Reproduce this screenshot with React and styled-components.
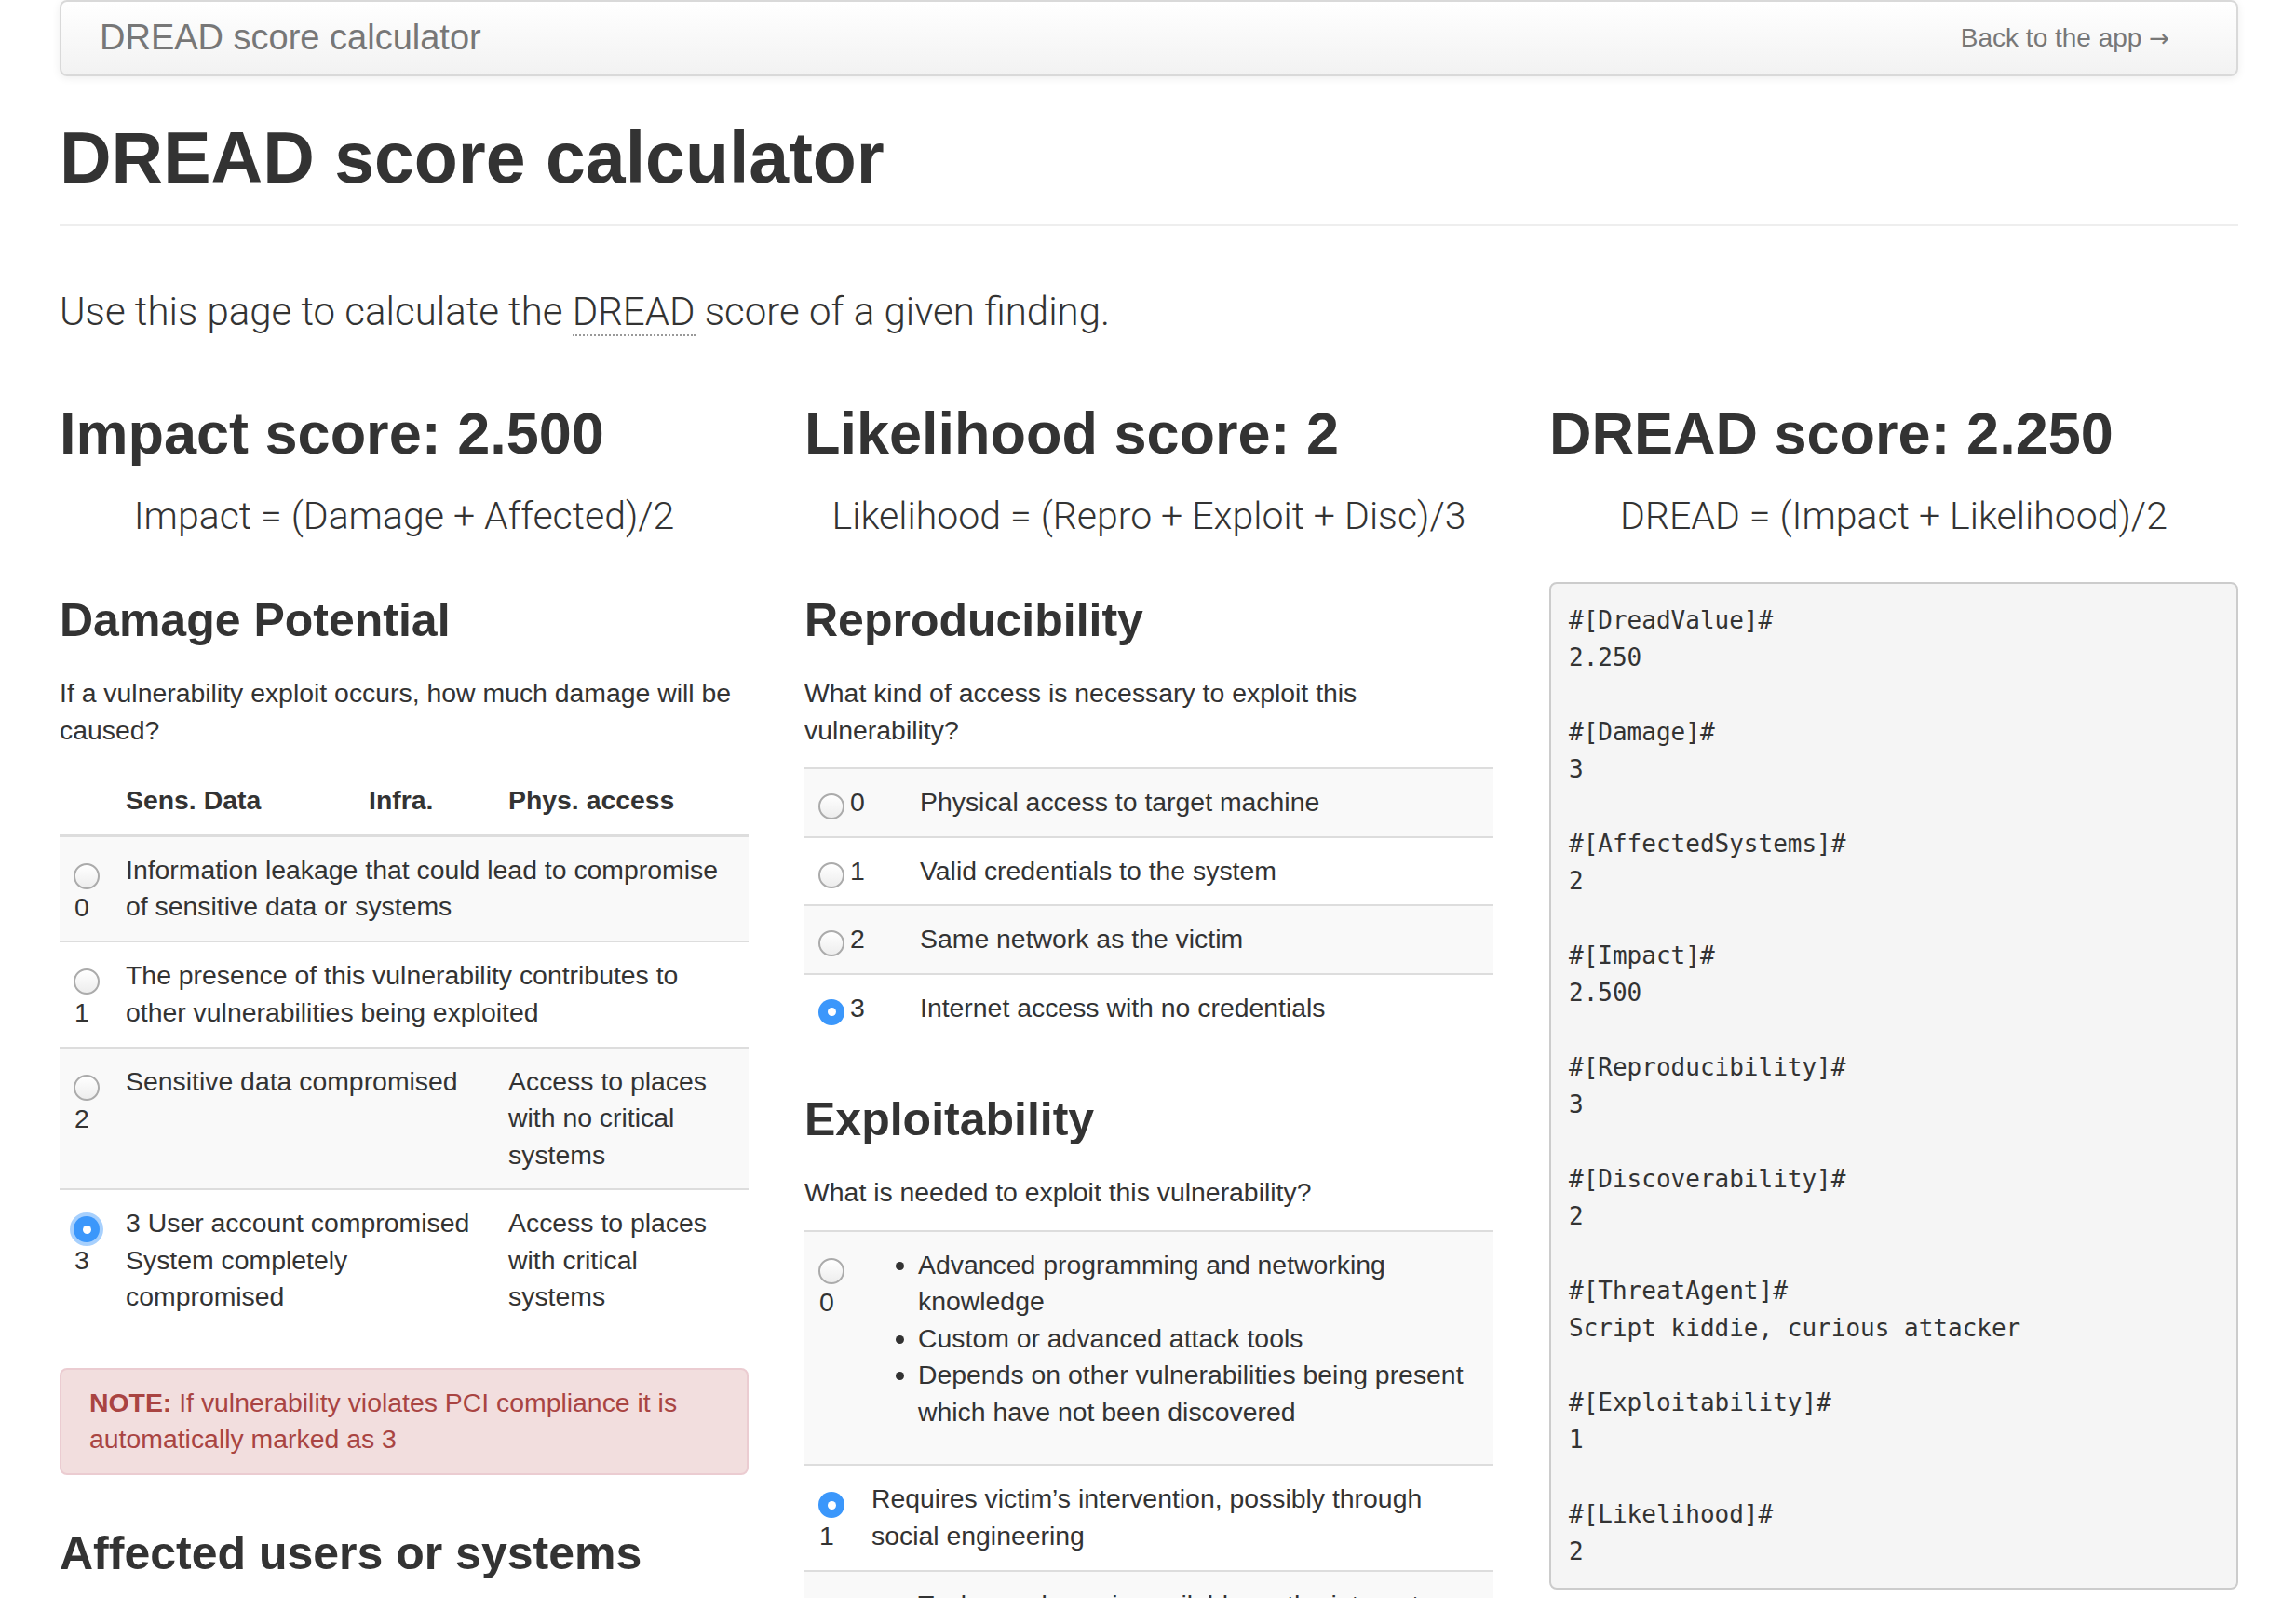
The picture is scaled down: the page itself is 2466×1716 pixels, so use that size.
import React from 'react';
import styled, { createGlobalStyle, css } from 'styled-components';

const GlobalStyle = createGlobalStyle`
  html, body {
    margin: 0;
    padding: 0;
    background: #ffffff;
    overflow: hidden;
  }
  body {
    font-family: "Liberation Sans", Arial, sans-serif;
    font-size: 28.4px;
    line-height: 39.5px;
    color: #333333;
  }
  * {
    box-sizing: border-box;
  }
`;

const Page = styled.div`
  width: 2340px;
  margin-left: 64px;
`;

const Navbar = styled.nav`
  height: 82px;
  display: flex;
  align-items: center;
  justify-content: space-between;
  padding: 0 72px 0 41px;
  border: 2px solid #d9d9d9;
  border-radius: 8px;
  background: linear-gradient(to bottom, #ffffff 0%, #f2f2f2 100%);
  box-shadow: 0 2px 10px rgba(0, 0, 0, 0.07);
`;

const Brand = styled.span`
  font-size: 38px;
  color: #777777;
`;

const BackLink = styled.a`
  font-size: 28px;
  color: #777777;
  text-decoration: none;
`;

const Arrow = styled.span`
  font-family: "DejaVu Sans", sans-serif;
  font-size: 26px;
`;

const Title = styled.h1`
  margin: 45px 0 0;
  padding-bottom: 29px;
  border-bottom: 2px solid #eeeeee;
  font-size: 77px;
  line-height: 85px;
  font-weight: 700;
`;

const Lead = styled.p`
  margin: ${p => (p.$center ? '26px 0 43px' : '64px 0 0')};
  text-align: ${p => (p.$center ? 'center' : 'left')};
  font-family: Roboto, "Liberation Sans", sans-serif;
  font-weight: 300;
  font-size: ${p => (p.$center ? 41 : 42)}px;
  line-height: 56px;
`;

const Abbr = styled.abbr`
  text-decoration: none;
  border-bottom: 2px dotted #999999;
`;

const Columns = styled.div`
  display: grid;
  grid-template-columns: repeat(3, 740px);
  column-gap: 60px;
  align-items: start;
  margin-top: 68px;
`;

const Column = styled.div``;

const ScoreHeading = styled.h2`
  margin: 0;
  font-size: 63px;
  line-height: 69px;
  font-weight: 700;
`;

const SectionTitle = styled.h3`
  margin: 57px 0 31px;
  font-size: 50px;
  line-height: 55px;
  font-weight: 700;
`;

const Question = styled.p`
  margin: 0 0 20px;
`;

const Table = styled.table`
  width: 100%;
  table-layout: fixed;
  border-collapse: collapse;
  margin-bottom: 40px;

  tbody tr:nth-child(odd) {
    background: #f9f9f9;
  }
`;

const Col = styled.col`
  width: ${p => p.$w}px;
`;

const Th = styled.th`
  padding: 16px;
  text-align: left;
  vertical-align: bottom;
  font-weight: 700;
  border-bottom: 3px solid #dddddd;
`;

const Td = styled.td`
  padding: 16px;
  vertical-align: top;
  border-top: 2px solid #dddddd;
`;

const Choice = styled.div`
  display: flex;
  flex-direction: ${p => (p.$stacked ? 'column' : 'row')};
  align-items: flex-start;
  gap: ${p => (p.$stacked ? 0 : 6)}px;
`;

const Radio = styled.span`
  flex: none;
  display: flex;
  align-items: center;
  justify-content: center;
  width: 28px;
  height: 28px;
  margin-top: ${p => p.$top}px;
  margin-left: -1px;
  border-radius: 50%;

  ${p =>
    p.$checked
      ? css`
          background: #3b97fb;
          box-shadow: ${p.$focus ? '0 0 0 4px rgba(59, 151, 251, 0.45)' : 'none'};
          &::after {
            content: '';
            width: 9px;
            height: 9px;
            border-radius: 50%;
            background: #ffffff;
          }
        `
      : css`
          border: 2px solid #ababab;
          background: linear-gradient(to bottom, #ffffff 0%, #ededed 100%);
        `}
`;

const Score = styled.span`
  line-height: 39.5px;
`;

const Bullets = styled.ul`
  margin: 0 0 20px;
  padding-left: 50px;
`;

const Alert = styled.div`
  margin-bottom: 40px;
  padding: 16px 30px;
  border: 2px solid #ebccd1;
  border-radius: 8px;
  background: #f2dede;
  color: #a94442;
`;

const Pre = styled.pre`
  margin: 0;
  padding: 19px;
  border: 2px solid #cccccc;
  border-radius: 8px;
  background: #f5f5f5;
  font-family: "DejaVu Sans Mono", "Liberation Mono", monospace;
  font-size: 26px;
  line-height: 40px;
  color: #333333;
  white-space: pre-wrap;
`;

const damageRows = [
  { value: 0, cells: [{ span: 3, text: 'Information leakage that could lead to compromise of sensitive data or systems' }] },
  { value: 1, cells: [{ span: 3, text: 'The presence of this vulnerability contributes to other vulnerabilities being exploited' }] },
  {
    value: 2,
    cells: [
      { span: 2, text: 'Sensitive data compromised' },
      { span: 1, text: 'Access to places with no critical systems' }
    ]
  },
  {
    value: 3,
    checked: true,
    focus: true,
    cells: [
      { span: 2, text: '3 User account compromised System completely compromised' },
      { span: 1, text: 'Access to places with critical systems' }
    ]
  }
];

const reproRows = [
  { value: 0, text: 'Physical access to target machine' },
  { value: 1, text: 'Valid credentials to the system' },
  { value: 2, text: 'Same network as the victim' },
  { value: 3, text: 'Internet access with no credentials', checked: true }
];

const exploitRows = [
  {
    value: 0,
    list: [
      'Advanced programming and networking knowledge',
      'Custom or advanced attack tools',
      'Depends on other vulnerabilities being present which have not been discovered'
    ]
  },
  { value: 1, checked: true, text: 'Requires victim\u2019s intervention, possibly through social engineering' },
  { value: 2, list: ['Tool or malware is available on the internet', 'Exploit is easily performed'] },
  { value: 3, list: ['Just a web browser', 'No tools necessary'] }
];

const output = [
  ['DreadValue', '2.250'],
  ['Damage', '3'],
  ['AffectedSystems', '2'],
  ['Impact', '2.500'],
  ['Reproducibility', '3'],
  ['Discoverability', '2'],
  ['ThreatAgent', 'Script kiddie, curious attacker'],
  ['Exploitability', '1'],
  ['Likelihood', '2']
];

const ChoiceCell = ({ row, stacked }) => (
  <Td>
    <Choice $stacked={stacked}>
      <Radio $top={stacked ? 12 : 10} $checked={row.checked} $focus={row.focus} />
      <Score>{row.value}</Score>
    </Choice>
  </Td>
);

const App = () => {
  const preText = output.map(([key, val]) => `#[${key}]#\n${val}`).join('\n\n');

  return (
    <>
      <GlobalStyle />
      <Page>
        <Navbar>
          <Brand>DREAD score calculator</Brand>
          <BackLink href="#">Back to the app <Arrow>→</Arrow></BackLink>
        </Navbar>

        <Title>DREAD score calculator</Title>
        <Lead>
          Use this page to calculate the <Abbr title="Damage, Reproducibility, Exploitability, Affected users, Discoverability">DREAD</Abbr> score of a given finding.
        </Lead>

        <Columns>
          {/* Impact */}
          <Column>
            <ScoreHeading>Impact score: 2.500</ScoreHeading>
            <Lead $center>Impact = (Damage + Affected)/2</Lead>

            <SectionTitle>Damage Potential</SectionTitle>
            <Question>If a vulnerability exploit occurs, how much damage will be caused?</Question>
            <Table>
              <colgroup>
                <Col $w={55} />
                <Col $w={261} />
                <Col $w={150} />
                <Col $w={274} />
              </colgroup>
              <thead>
                <tr>
                  <Th />
                  <Th>Sens. Data</Th>
                  <Th>Infra.</Th>
                  <Th>Phys. access</Th>
                </tr>
              </thead>
              <tbody>
                {damageRows.map(row => (
                  <tr key={row.value}>
                    <ChoiceCell row={row} stacked />
                    {row.cells.map((cell, i) => (
                      <Td key={i} colSpan={cell.span}>{cell.text}</Td>
                    ))}
                  </tr>
                ))}
              </tbody>
            </Table>

            <Alert>
              <strong>NOTE:</strong> If vulnerability violates PCI compliance it is automatically marked as 3
            </Alert>

            <SectionTitle>Affected users or systems</SectionTitle>
            <Question>How many users or systems will be impacted?</Question>
          </Column>

          {/* Likelihood */}
          <Column>
            <ScoreHeading>Likelihood score: 2</ScoreHeading>
            <Lead $center>Likelihood = (Repro + Exploit + Disc)/3</Lead>

            <SectionTitle>Reproducibility</SectionTitle>
            <Question>What kind of access is necessary to exploit this vulnerability?</Question>
            <Table>
              <colgroup>
                <Col $w={108} />
                <Col $w={632} />
              </colgroup>
              <tbody>
                {reproRows.map(row => (
                  <tr key={row.value}>
                    <ChoiceCell row={row} />
                    <Td>{row.text}</Td>
                  </tr>
                ))}
              </tbody>
            </Table>

            <SectionTitle>Exploitability</SectionTitle>
            <Question>What is needed to exploit this vulnerability?</Question>
            <Table>
              <colgroup>
                <Col $w={56} />
                <Col $w={684} />
              </colgroup>
              <tbody>
                {exploitRows.map(row => (
                  <tr key={row.value}>
                    <ChoiceCell row={row} stacked />
                    <Td>
                      {row.list ? (
                        <Bullets>
                          {row.list.map(item => (
                            <li key={item}>{item}</li>
                          ))}
                        </Bullets>
                      ) : (
                        row.text
                      )}
                    </Td>
                  </tr>
                ))}
              </tbody>
            </Table>
          </Column>

          {/* DREAD */}
          <Column>
            <ScoreHeading>DREAD score: 2.250</ScoreHeading>
            <Lead $center>DREAD = (Impact + Likelihood)/2</Lead>
            <Pre>{preText}</Pre>
          </Column>
        </Columns>
      </Page>
    </>
  );
};

export default App;
